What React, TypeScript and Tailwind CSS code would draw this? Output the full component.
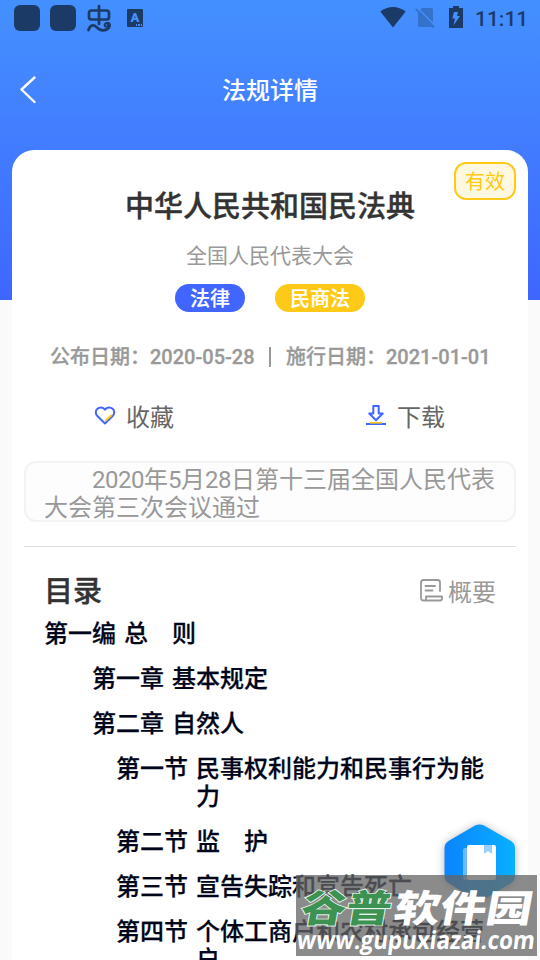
import React from "react";

const font = "font-['Roboto','Noto_Sans_CJK_SC',sans-serif]";

function StatusBar() {
  return (
    <div className="flex h-9 items-center justify-between pl-[14px] pr-[13px] text-[#1c3a66]">
      <div className="flex items-center">
        <div className="h-[26px] w-[26px] rounded-[6px] bg-[#1c3a66]" />
        <div className="ml-[10px] h-[26px] w-[26px] rounded-[6px] bg-[#1c3a66]" />
        <svg className="ml-[11px]" width="25" height="28" viewBox="0 0 25 28" fill="none" stroke="currentColor" strokeWidth="2.7" strokeLinecap="round">
          <rect x="2" y="6.5" width="20" height="9" rx="2.5" />
          <path d="M12 2v18M1.500 26C3 21 6.500 20 9.500 23.200S16 27.500 20.500 25c3.200-2 2.500-6 0-6" />
          <circle cx="19.500" cy="21" r="1.800" strokeWidth="2" />
        </svg>
        <div className="relative ml-[15px] flex h-[18px] w-4 items-center justify-center rounded-[1px] bg-[#1c3a66] pb-[2px] font-['Roboto',sans-serif] text-[13px] leading-none font-black text-[#4590ff]">
          A
          <span className="absolute right-px bottom-[1px] flex gap-px">
            <i className="h-[2px] w-[1.500px] bg-[#4590ff]" />
            <i className="h-[2px] w-[1.500px] bg-[#4590ff]" />
            <i className="h-[2px] w-[1.500px] bg-[#4590ff]" />
          </span>
        </div>
      </div>
      <div className="flex items-center">
        <svg className="mt-[-2px]" width="26" height="22" viewBox="0 0 26 22" fill="currentColor">
          <path d="M.3 5.500C8-.6 18-.6 25.700 5.500L13 21.500z" />
        </svg>
        <svg className="mt-[-2px] ml-[9px]" width="20" height="22" viewBox="0 0 20 22">
          <path d="M7 2h9.500q1.500 0 1.500 1.500v16q0 1.500-1.500 1.500h-12Q3 21 3 19.500V6z" fill="#3472cc" />
          <path d="M2.500 2 21 20.500" stroke="#4590ff" strokeWidth="1.500" />
          <path d="M.8 3 19 21.500" stroke="#3472cc" strokeWidth="2" />
        </svg>
        <svg className="mt-[-2px] ml-[14px]" width="14" height="22" viewBox="0 0 14 22">
          <path d="M4 0h6v2h4v20H0V2h4z" fill="currentColor" />
          <path d="M5 6h4L8 10h3L4.500 19.500 6 12.500H3.300z" fill="#4590ff" />
        </svg>
        <span className="ml-[12px] w-[52px] pt-[2px] text-[21px] leading-[34px] font-medium whitespace-nowrap">11:11</span>
      </div>
    </div>
  );
}

const toc = [
  { pad: "pl-0", no: "第一编", name: "总　则" },
  { pad: "pl-12", no: "第一章", name: "基本规定" },
  { pad: "pl-12", no: "第二章", name: "自然人" },
  { pad: "pl-[72px]", no: "第一节", name: "民事权利能力和民事行为能力" },
  { pad: "pl-[72px]", no: "第二节", name: "监　护" },
  { pad: "pl-[72px]", no: "第三节", name: "宣告失踪和宣告死亡" },
  { pad: "pl-[72px]", no: "第四节", name: "个体工商户和农村承包经营户" },
];

export default function App() {
  return (
    <div className={`relative h-[960px] w-[540px] overflow-hidden bg-[#fafafa] bg-[linear-gradient(#4490ff,#3f66ff)] bg-[length:100%_300px] bg-no-repeat ${font}`}>
      <StatusBar />
      <header className="grid h-[114px] grid-cols-[1fr_auto_1fr] items-start pt-9">
        <svg className="mt-[4px] ml-[20px]" width="17" height="28" viewBox="0 0 17 28" fill="none" stroke="white" strokeWidth="2.400" strokeLinecap="round" strokeLinejoin="round">
          <path d="M14.500 1.500 1.500 13.500l13 12.500" />
        </svg>
        <h1 className="pt-px text-2xl leading-9 font-medium text-white">法规详情</h1>
      </header>

      <main className="relative mx-3 h-[810px] overflow-hidden rounded-t-[22px] bg-white px-3">
        <div className="absolute top-3 right-3 flex h-[38px] w-[62px] items-center justify-center rounded-[12px] border-2 border-[#ffc918] bg-[#fff8e0] pt-[2px] text-[20px] leading-8 text-[#ffc918]">有效</div>
        <h2 className="pt-[37px] text-center text-[29px] leading-10 font-medium text-[#333] [-webkit-text-stroke:0.4px]">中华人民共和国民法典</h2>
        <p className="mt-[13px] text-center text-[21px] leading-8 text-[#999]">全国人民代表大会</p>
        <div className="mt-3 flex justify-center gap-[30px] text-[20px] leading-[30px] font-medium text-white [-webkit-text-stroke:0.2px]">
          <span className="h-7 w-[70px] rounded-full bg-[#4066ff] text-center">法律</span>
          <span className="h-7 w-[90px] rounded-full bg-[#ffc918] text-center">民商法</span>
        </div>
        <div className="mt-[30px] flex items-center justify-center text-[20px] leading-[30px] font-medium whitespace-nowrap text-[#999] [-webkit-text-stroke:0.3px]">
          <span className="w-[204px]">公布日期：2020-05-28</span>
          <i className="mx-[15px] h-5 w-[2px] bg-[#999]" />
          <span className="w-[204px]">施行日期：2021-01-01</span>
        </div>

        <div className="mt-[28px] flex h-9 items-center text-2xl leading-9 text-[#666]">
          <div className="ml-[70px] flex items-center">
            <svg className="mt-[-5px] mr-[10px]" width="22" height="20" viewBox="0 0 22 20" fill="none" strokeLinecap="round">
              <path d="M11 3.600C9 .8 5.500.9 3.400 2.800 1 5 1.500 8 3.400 10L11 17.500 18.600 10C20.500 8 21 5 18.600 2.800 16.500.9 13 .8 11 3.600z" stroke="#4066ff" strokeWidth="2" strokeLinejoin="round" />
              <path d="m12 14.200 5.400-5" stroke="#ffc918" strokeWidth="2" />
            </svg>
            收藏
          </div>
          <div className="ml-[192px] flex items-center">
            <svg className="mt-[-6px] mr-[11px]" width="20" height="22" viewBox="0 0 20 22" fill="none">
              <path d="M7.300 2h5.400v7.500h4L10 16.200 3.300 9.500h4z" stroke="#4066ff" strokeWidth="2" strokeLinejoin="round" />
              <path d="M0 20h20" stroke="#4066ff" strokeWidth="2" />
              <path d="M4 18.800h12" stroke="#ffc918" strokeWidth="1.600" />
            </svg>
            下载
          </div>
        </div>

        <div className="mt-[25px] h-[61px] rounded-[12px] border-2 border-[#f3f3f3] bg-[#fdfdfd] px-[18px] pt-[3px] text-2xl leading-7 text-[#999]">
          <p className="w-[456px] indent-12">
            <span className="tracking-[-0.5px]">2020</span>年<span className="tracking-[-0.5px]">5</span>月<span className="tracking-[-0.5px]">28</span>日第十三届全国人民代表大会第三次会议通过
          </p>
        </div>
        <hr className="mt-6 border-[#dedede]" />

        <div className="mt-[25px] flex items-center justify-between pr-5 pl-5">
          <h3 className="text-[29px] leading-10 font-medium text-[#333] [-webkit-text-stroke:0.4px]">目录</h3>
          <div className="flex items-center pt-px text-2xl leading-9 text-[#999]">
            <svg className="mt-[-4px] mr-[5px]" width="23" height="23" viewBox="0 0 23 23" fill="none" stroke="#999" strokeWidth="1.800" strokeLinecap="round" strokeLinejoin="round">
              <path d="M6 21.500H3.500Q1 21.500 1 19V3.500Q1 1 3.500 1h14Q20 1 20 3.500V12M5.500 7H15M5.500 11.500h7M6 21.500v-4h16v2q0 2-2 2z" />
            </svg>
            概要
          </div>
        </div>
        <ul className="mt-2 ml-5 flex w-[460px] flex-col gap-[17px] text-2xl leading-7 font-medium text-[#02061a] [-webkit-text-stroke:0.25px]">
          {toc.map((t, i) => (
            <li key={i} className={`flex ${t.pad}`}>
              <span className="mr-2 shrink-0">{t.no}</span>
              <span className="w-[296px]">{t.name}</span>
            </li>
          ))}
        </ul>
      </main>

      <svg className="absolute top-[818px] left-[438px] drop-shadow-[0_1px_4px_rgba(0,0,0,0.3)]" width="84" height="90" viewBox="0 0 84 90">
        <defs>
          <linearGradient id="hex">
            <stop stopColor="#0a84ff" />
            <stop offset="1" stopColor="#08b0ff" />
          </linearGradient>
        </defs>
        <path d="M37 7.500q4.500-2 9 0L73 23q4 2.500 4 7v28q0 4.500-4 7L46 81.500q-4.500 2-9 0L10.500 65q-4-2.500-4-7V30q0-4.500 4-7z" fill="url(#hex)" />
        <path d="M25 32q0-2 2-2h3v32h-3q-2 0-2-2z" fill="#6bb9ff" />
        <rect x="29" y="27" width="29" height="35" rx="2" fill="white" />
        <path d="M46 27h8v9l-4-3-4 3z" fill="#99ceff" />
      </svg>

      <div className="absolute top-[875px] left-[296px] h-[81px] w-[241px] bg-[#646464]/75">
        <svg width="241" height="81" viewBox="0 0 241 81" className="font-['Noto_Sans_CJK_SC',sans-serif] font-black">
          <g transform="translate(0 48) skewX(-10) scale(1 .88)">
            <text x="3" y="-1" fontSize="43" textLength="90" lengthAdjust="spacingAndGlyphs" fill="#3d9152" stroke="#e8f3ea" strokeWidth="2" paintOrder="stroke">谷普</text>
            <text x="96" y="-1" fontSize="43" textLength="138" lengthAdjust="spacingAndGlyphs" fill="white">软件园</text>
          </g>
          <g transform="translate(0 74) skewX(-7)">
            <text x="0" y="0" fontSize="25" textLength="238" lengthAdjust="spacingAndGlyphs" fill="white" className="font-['Open_Sans',sans-serif] font-bold">www.gupuxiazai.com</text>
          </g>
        </svg>
      </div>
    </div>
  );
}
